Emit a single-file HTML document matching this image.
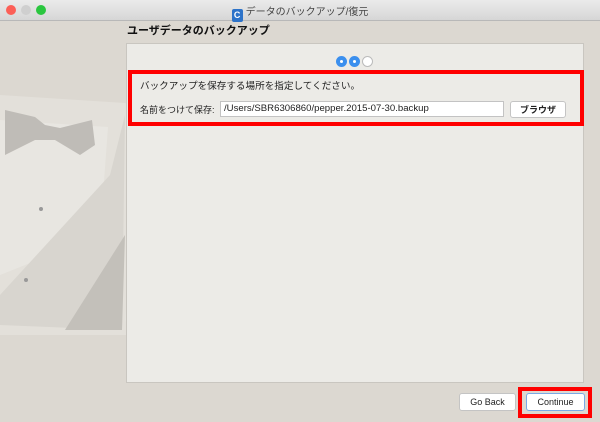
<!DOCTYPE html>
<html><head><meta charset="utf-8"><style>
*{margin:0;padding:0;box-sizing:border-box}
body{width:600px;height:422px;overflow:hidden;background:#dcd8d1;font-family:"Liberation Sans","Noto Sans CJK JP",sans-serif;position:relative;font-size:9px;color:#222}
.tb{position:absolute;left:0;top:0;width:600px;height:21px;background:linear-gradient(#ebebeb,#d6d6d6);border-bottom:1px solid #b8b8b8}
.tl{position:absolute;top:5px;width:10px;height:10px;border-radius:50%}
.ttl{position:absolute;left:0;right:0;top:3px;text-align:center;font-size:10px;color:#444}
.ic{display:inline-block;width:11px;height:13px;background:#2d73c9;color:#fff;font-weight:bold;font-size:9px;line-height:13px;text-align:center;border-radius:2px;vertical-align:-3px;margin-right:3px}
h1{position:absolute;left:127px;top:22px;font-size:11px;font-weight:bold;color:#111}
.panel{position:absolute;left:126px;top:43px;width:458px;height:340px;background:#ecebe7;border:1px solid #c9c6c0}
.dot{position:absolute;top:56px;width:11px;height:11px;border-radius:50%}
.red{position:absolute;border:4px solid #f00}
.btn{position:absolute;background:#fff;border:1px solid #c4c4c4;border-radius:3px;text-align:center;font-size:9px;line-height:16px}
</style></head><body>
<div class="tb">
<div class="tl" style="left:6px;background:#fc5f57"></div>
<div class="tl" style="left:21px;background:#cfcfcf"></div>
<div class="tl" style="left:36px;background:#2ac63f"></div>
<div class="ttl"><span class="ic">C</span>データのバックアップ/復元</div>
</div>
<svg style="position:absolute;left:0;top:95px" width="165" height="245">
<path d="M0 0 L125 8 L158 20 L128 240 L0 240Z" fill="#e3e0da"/>
<path d="M145 25 L158 25 L130 235 L125 225Z" fill="#e4e2dd"/>
<path d="M0 25 L108 32 L100 140 L0 180Z" fill="#e8e6e1"/>
<path d="M0 200 L110 80 L125 20 L122 235 L0 230Z" fill="#d8d5cf"/>
<path d="M65 235 L125 140 L122 235Z" fill="#c3c0ba"/>
<path d="M5 15 L35 22 L45 30 L60 33 L92 25 L95 50 L80 60 L55 45 L35 45 L5 60Z" fill="#bfbcb7"/>
<circle cx="41" cy="114" r="2" fill="#999"/><circle cx="26" cy="185" r="2" fill="#999"/>
</svg>
<h1>ユーザデータのバックアップ</h1>
<div class="panel"></div>
<div class="dot" style="left:336px;background:#3b8fee;border:3px solid #3b8fee"><div style="width:3px;height:3px;background:#fff;border-radius:50%;margin:1px"></div></div>
<div class="dot" style="left:349px;background:#3b8fee;border:3px solid #3b8fee"><div style="width:3px;height:3px;background:#fff;border-radius:50%;margin:1px"></div></div>
<div class="dot" style="left:362px;background:#fff;border:1px solid #bbb"></div>
<div class="red" style="left:128px;top:70px;width:456px;height:56px"></div>
<div style="position:absolute;left:140px;top:78px;font-size:9.6px">バックアップを保存する場所を指定してください。</div>
<div style="position:absolute;left:140px;top:103px">名前をつけて保存:</div>
<div style="position:absolute;left:220px;top:101px;width:284px;height:16px;background:#fff;border:1px solid #c3c3c3;padding-left:3px;line-height:14px;font-size:9.6px">/Users/SBR6306860/pepper.2015-07-30.backup</div>
<div class="btn" style="left:510px;top:101px;width:56px;height:17px;font-weight:bold">ブラウザ</div>
<div class="btn" style="left:459px;top:393px;width:57px;height:18px">Go Back</div>
<div class="btn" style="left:526px;top:393px;width:59px;height:18px;border-color:#7aa9e6">Continue</div>
<div class="red" style="left:518px;top:387px;width:74px;height:31px"></div>
</body></html>
